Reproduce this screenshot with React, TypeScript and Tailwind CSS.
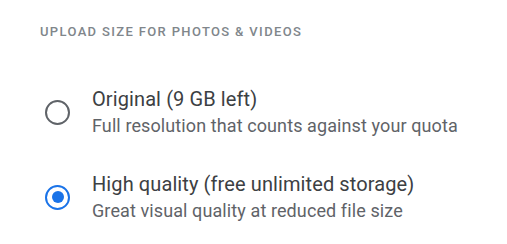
import React, { useState } from 'react';

const options = [
  { id: 'original', title: 'Original (9 GB left)', desc: 'Full resolution that counts against your quota' },
  { id: 'high', title: 'High quality (free unlimited storage)', desc: 'Great visual quality at reduced file size' },
];

export default function App() {
  const [selected, setSelected] = useState('high');

  return (
    <div className="w-[507px] h-[244px] bg-white font-['Roboto',sans-serif]">
      <div className="pl-10 pt-[24px] text-[13px] font-medium tracking-[1.35px] text-[#80868b] leading-[16px]">
        UPLOAD SIZE FOR PHOTOS &amp; VIDEOS
      </div>
      <div className="mt-[46px] flex flex-col gap-[33px]">
        {options.map((o) => {
          const on = selected === o.id;
          return (
            <label key={o.id} className="flex items-center cursor-pointer" onClick={() => setSelected(o.id)}>
              <span className="w-[92px] flex pl-[45px]">
                <span
                  className={`w-[25px] h-[25px] rounded-full border-[2.5px] flex items-center justify-center ${
                    on ? 'border-[#1a73e8]' : 'border-[#5f6368]'
                  }`}
                >
                  {on && <span className="w-[12px] h-[12px] rounded-full bg-[#1a73e8]" />}
                </span>
              </span>
              <span className="flex flex-col">
                <span className="text-[20px] leading-[26px] tracking-[0.1px] text-[#3c4043]">{o.title}</span>
                <span className="mt-[2px] text-[18px] leading-[24px] tracking-[0.1px] text-[#5f6368]">{o.desc}</span>
              </span>
            </label>
          );
        })}
      </div>
    </div>
  );
}
